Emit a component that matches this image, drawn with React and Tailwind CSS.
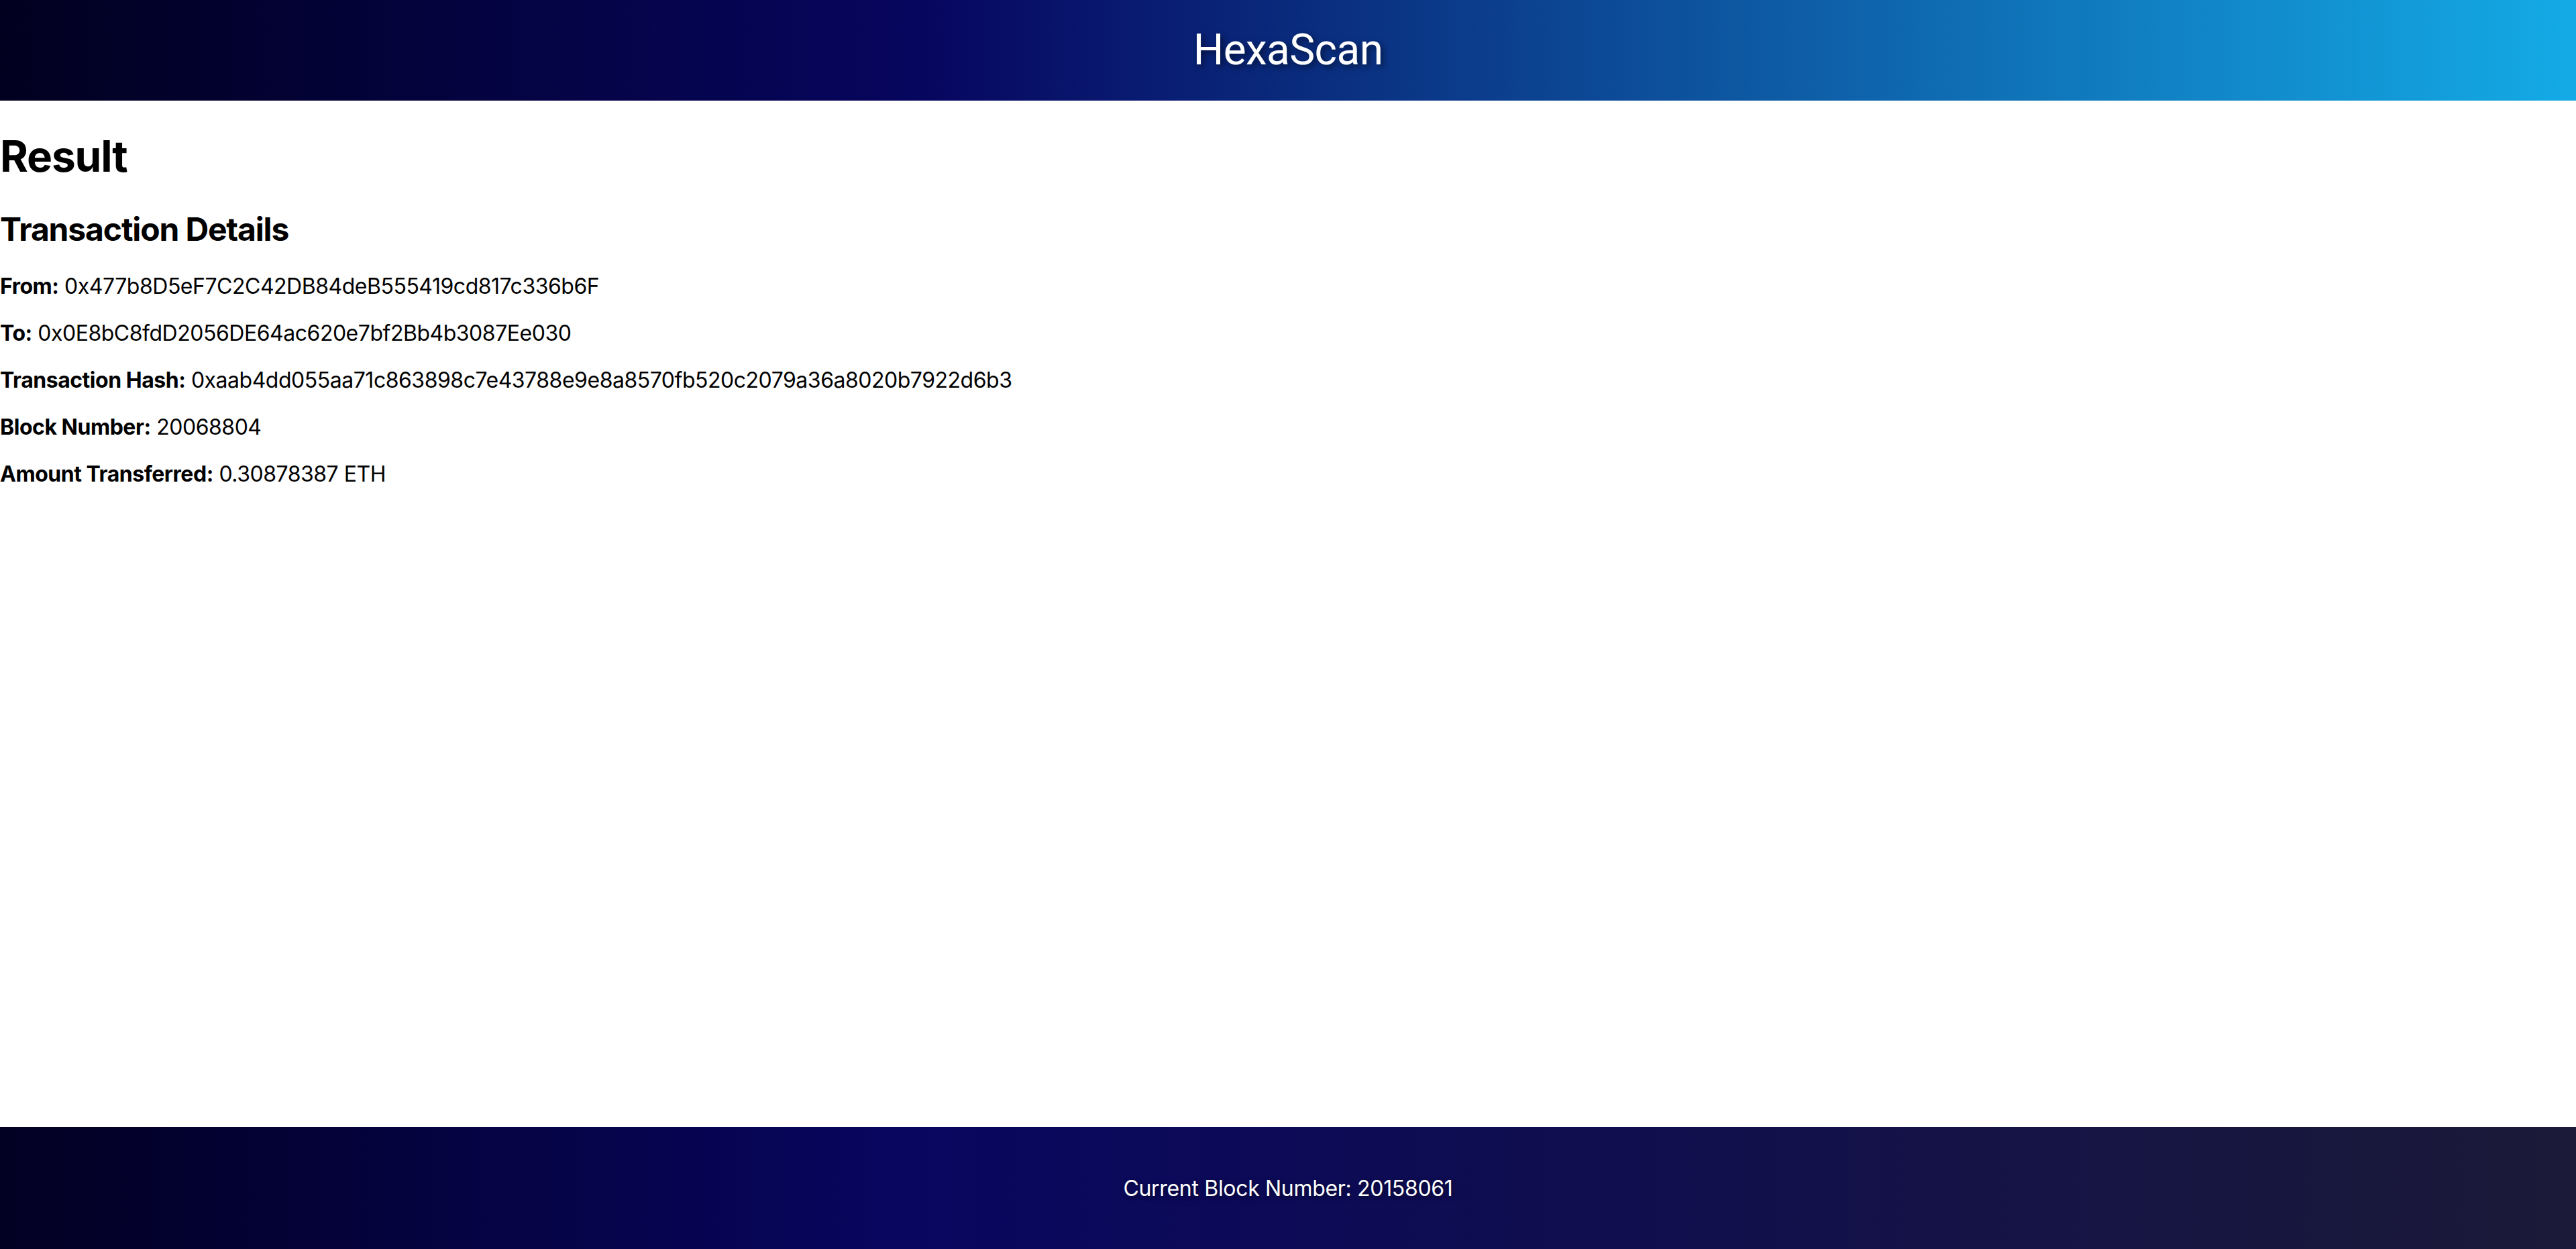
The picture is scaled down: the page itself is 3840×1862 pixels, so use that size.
export default function App() {
  const rows = [
    ["From:", "0x477b8D5eF7C2C42DB84deB555419cd817c336b6F"],
    ["To:", "0x0E8bC8fdD2056DE64ac620e7bf2Bb4b3087Ee030"],
    ["Transaction Hash:", "0xaab4dd055aa71c863898c7e43788e9e8a8570fb520c2079a36a8020b7922d6b3"],
    ["Block Number:", "20068804"],
    ["Amount Transferred:", "0.30878387 ETH"],
  ];
  return (
    <div className="flex min-h-screen flex-col bg-white text-black" style={{ fontFamily: "Inter, 'Noto Sans', sans-serif" }}>
      <header className="flex h-[150px] shrink-0 items-center justify-center bg-[linear-gradient(90deg,#01001f_0%,#07065f_36%,#14abe6_100%)]">
        <h1 className="font-['Roboto',sans-serif] text-[64px] font-normal leading-[78px] tracking-[-0.01em] text-white [text-shadow:4px_4px_8px_rgba(0,0,0,0.5)]">HexaScan</h1>
      </header>
      <main className="flex-1">
        <h1 className="mt-[44px] text-[64px] font-bold leading-[78px] tracking-[-0.019em]">Result</h1>
        <h2 className="mt-[41px] text-[48px] font-bold leading-[58px] tracking-[-0.024em]">Transaction Details</h2>
        <div className="mt-[36px] flex flex-col gap-[31px]">
          {rows.map(([k, v]) => (
            <p key={k} className="text-[32px] leading-[39px] tracking-[-0.015em]">
              <strong className="font-bold">{k}</strong> {v}
            </p>
          ))}
        </div>
      </main>
      <footer className="flex h-[182px] shrink-0 items-center justify-center bg-[linear-gradient(90deg,#020022_0%,#08065f_35%,#1b1a38_100%)]">
        <p className="text-[32px] leading-[39px] tracking-[-0.01em] text-white [text-shadow:2px_2px_6px_rgba(0,0,0,0.5)]">Current Block Number: 20158061</p>
      </footer>
    </div>
  );
}
